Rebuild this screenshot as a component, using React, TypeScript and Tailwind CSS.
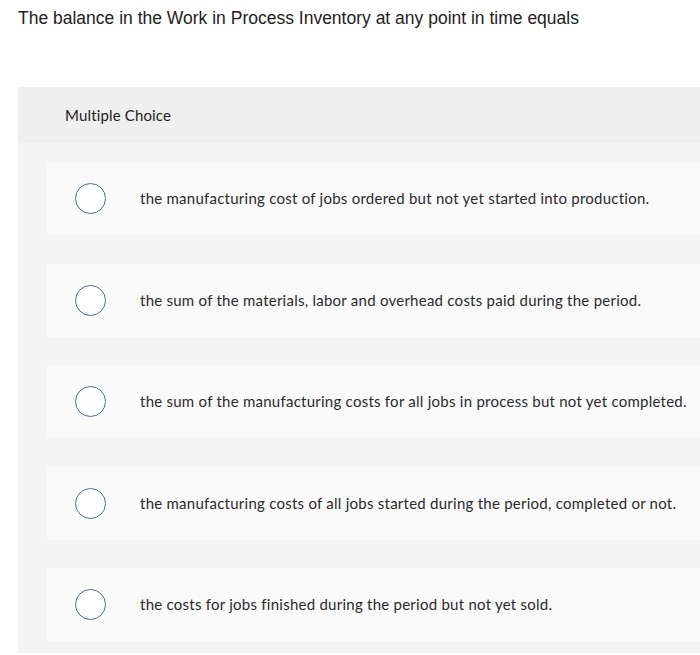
const options = [
  "the manufacturing cost of jobs ordered but not yet started into production.",
  "the sum of the materials, labor and overhead costs paid during the period.",
  "the sum of the manufacturing costs for all jobs in process but not yet completed.",
  "the manufacturing costs of all jobs started during the period, completed or not.",
  "the costs for jobs finished during the period but not yet sold.",
];

function Radio() {
  return (
    <span className="block w-[31px] h-[31px] shrink-0 rounded-full border-[1.5px] border-[#4a6f95] bg-white" />
  );
}

export default function App() {
  return (
    <div className="w-[700px] h-[655px] overflow-hidden bg-white text-[#2b2b2b] font-['Lato','Liberation_Sans',sans-serif]">
      <h1 className="pl-[18px] pt-[7px] text-[17.5px] leading-[22px] font-['Liberation_Sans',Arial,sans-serif] text-[#222]">
        The balance in the Work in Process Inventory at any point in time equals
      </h1>

      <div className="ml-[18px] mt-[58px] h-[566px] bg-[#f4f4f4]">
        <div className="h-[56px] bg-[#efefef] pl-[47px] flex items-center text-[15px] tracking-[0.15px] text-[#222]">
          Multiple Choice
        </div>
        <div className="pl-[29px] pt-[19px] flex flex-col gap-[28.5px]">
          {options.map((opt) => (
            <div
              key={opt}
              className="h-[73px] bg-[#fafafa] flex items-center pl-[28px] gap-[34px]"
            >
              <Radio />
              <span className="text-[15px] tracking-[0.25px] text-[#2b2b2b] whitespace-nowrap">
                {opt}
              </span>
            </div>
          ))}
        </div>
      </div>
    </div>
  );
}
